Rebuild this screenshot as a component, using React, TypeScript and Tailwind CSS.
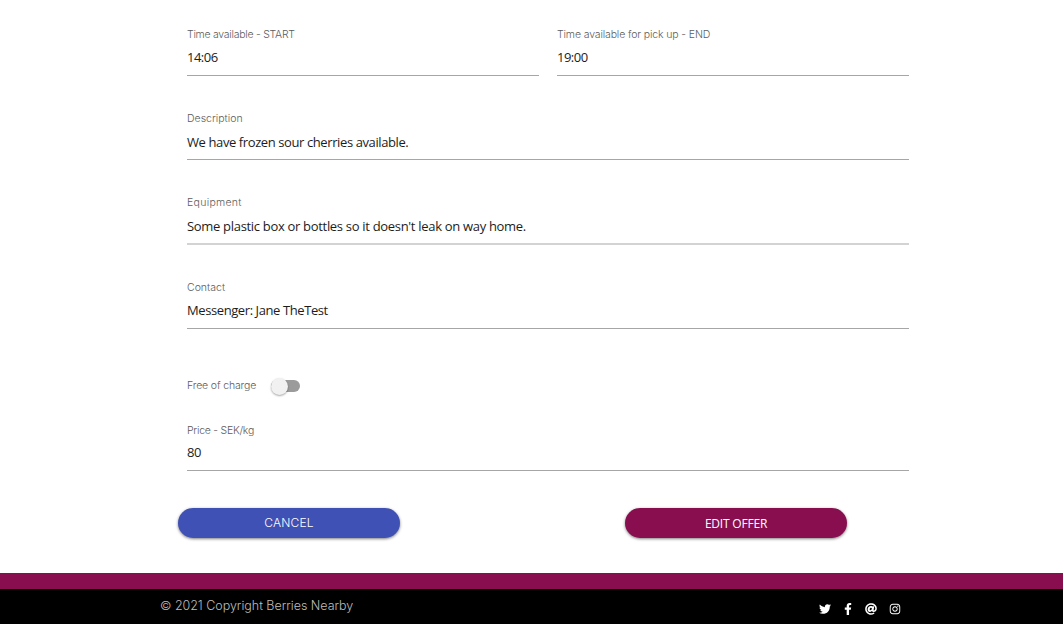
import { FaAt, FaFacebookF, FaInstagram, FaTwitter } from "react-icons/fa";

type FieldProps = {
  label: string;
  value: string;
  tracking?: string;
  valueClass?: string;
  lineClass?: string;
};

const labelClass =
  "block h-[14px] whitespace-nowrap font-['Inter',sans-serif] text-[10.5px] leading-[14px] font-light text-[#5c5c5c]";

function Field({ label, value, tracking = "", valueClass = "mt-[6px]", lineClass = "h-[49px] border-b border-[#a6a6a6]" }: FieldProps) {
  return (
    <label className={`block min-w-0 flex-1 pt-px ${lineClass}`}>
      <span className={`${labelClass} ${tracking}`}>{label}</span>
      <span
        className={`block h-5 whitespace-nowrap font-['Open_Sans','Noto_Sans',sans-serif] text-[13px] leading-5 text-[#1c1c1c] ${valueClass}`}
      >
        {value}
      </span>
    </label>
  );
}

export default function App() {
  return (
    <div className="flex h-[624px] w-[1063px] flex-col overflow-hidden bg-white">
      <main className="h-[573px] shrink-0 pt-[27px]">
        <form className="ml-[187px] flex w-[722px] flex-col">
          <div className="flex gap-[18px]">
            <Field label="Time available - START" value="14:06" tracking="tracking-[-0.26px]" valueClass="mt-[5px] tracking-[-0.5px]" />
            <Field label="Time available for pick up - END" value="19:00" tracking="tracking-[-0.13px]" valueClass="mt-[5px] tracking-[-0.5px]" />
          </div>
          <div className="mt-[35px] flex">
            <Field label="Description" value="We have frozen sour cherries available." valueClass="mt-[6px] tracking-[-0.4px]" />
          </div>
          <div className="mt-[35px] flex">
            <Field
              label="Equipment"
              value="Some plastic box or bottles so it doesn't leak on way home."
              tracking="tracking-[0.3px]"
              valueClass="mt-[6px] tracking-[-0.31px]"
              lineClass="h-[50px] border-b-2 border-[#d3d3d3]"
            />
          </div>
          <div className="mt-[35px] flex">
            <Field label="Contact" value="Messenger: Jane TheTest" valueClass="mt-[5px] tracking-[-0.41px]" />
          </div>
          <div className="mt-[47px] flex h-5 items-center">
            <span className={`${labelClass} w-[84px] tracking-[-0.14px]`}>Free of charge</span>
            <button type="button" role="switch" aria-checked="false" aria-label="Free of charge" className="flex h-5 w-[29px] items-center">
              <span className="flex h-3 w-[29px] items-center rounded-full bg-[#9b9b9b]">
                <span className="size-[17px] shrink-0 rounded-full bg-[#f1f1f1] shadow-[0_1px_2px_rgba(0,0,0,0.35)]" />
              </span>
            </button>
          </div>
          <div className="mt-[27px] flex">
            <Field
              label="Price - SEK/kg"
              value="80"
              tracking="tracking-[-0.25px]"
              valueClass="mt-[4px] tracking-[-0.4px]"
              lineClass="h-[48px] border-b border-[#a6a6a6]"
            />
          </div>
        </form>
        <div className="mt-[37px] ml-[178px] flex w-[669px] justify-between">
          <button
            type="button"
            className="h-[30px] w-[222px] rounded-full bg-[#3f51b5] font-['Inter',sans-serif] text-[12px] font-light tracking-[0.2px] text-white shadow-[0_1px_3px_rgba(0,0,0,0.5)]"
          >
            CANCEL
          </button>
          <button
            type="button"
            className="h-[30px] w-[222px] rounded-full bg-[#880e4f] pt-px font-['Open_Sans','Noto_Sans',sans-serif] text-[12px] tracking-[-0.2px] text-white shadow-[0_1px_3px_rgba(0,0,0,0.5)]"
          >
            EDIT OFFER
          </button>
        </div>
      </main>
      <footer className="flex h-[51px] justify-between border-t-[16px] border-[#880e4f] bg-black pr-[162px] pl-[160px]">
        <p className="mt-[7px] whitespace-nowrap font-['Inter',sans-serif] text-[12.5px] leading-5 font-light tracking-[-0.03px] text-[#bdbdbd]">
          © 2021 Copyright Berries Nearby
        </p>
        <div className="mt-[14px] flex h-3 items-center text-[12px] text-white">
          <FaTwitter className="size-3" />
          <FaFacebookF className="ml-[11px] size-3" />
          <FaAt className="ml-[11px] size-3" />
          <FaInstagram className="ml-[12px] size-3" />
        </div>
      </footer>
    </div>
  );
}
